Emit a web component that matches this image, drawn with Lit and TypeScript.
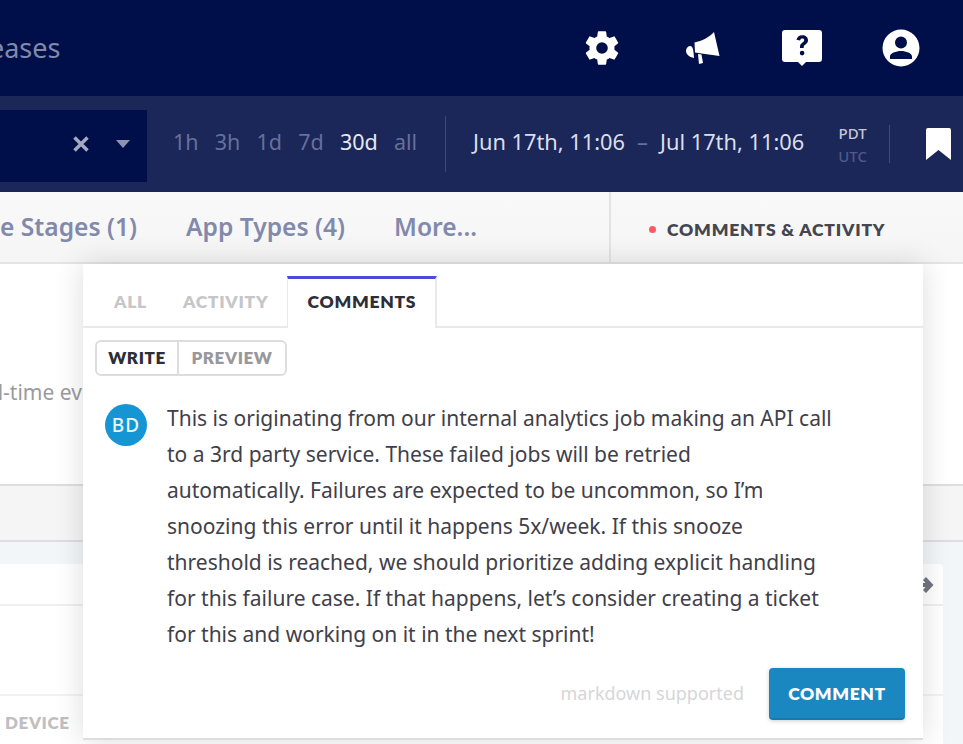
import { LitElement, html, css, svg } from "lit";
import { customElement } from "lit/decorators.js";

@customElement("app-root")
export class AppRoot extends LitElement {
  static styles = css`
    :host { display: block; width: 963px; height: 744px; overflow: hidden; position: relative; background: #fff; font-family: "Noto Sans", sans-serif; }
    * { box-sizing: border-box; }
    .top { height: 96px; background: #000f4a; display: flex; align-items: center; overflow: hidden; }
    .brand { margin-left: -50px; font: 27px "Noto Sans", sans-serif; color: #8089a8; flex: 1; white-space: nowrap; padding-bottom: 1px; }
    .icons { display: flex; align-items: center; }
    .icons svg { display: block; fill: #fff; }
    .i1 { margin-right: 64px; } .i2 { margin-right: 62px; } .i3 { margin-right: 60px; } .i4 { margin-right: 43px; }
    .sub { height: 96px; background: #1b2659; display: flex; align-items: center; }
    .search { width: 147px; height: 72px; margin-top: 4px; padding-bottom: 4px; background: #000f4a; display: flex; align-items: center; justify-content: flex-end; padding-right: 17px; gap: 26px; }
    .caret { width: 0; height: 0; border: 7px solid transparent; border-top: 8px solid #8e95b0; border-bottom: 0; }
    .ranges { display: flex; gap: 16.2px; margin-left: 26px; padding-bottom: 5px; font-size: 21.5px; color: #67709a; width: 272px; }
    .ranges .on { color: #e6e8f0; }
    .sep { width: 1px; background: #4f4a50; flex: none; }
    .sep.a { height: 56px; }
    .sep.b { height: 38px; margin-left: 22px; margin-top: -1px; }
    .dates { display: flex; margin-left: 27px; padding-bottom: 5px; font-size: 21.8px; color: #dcdfe9; white-space: nowrap; }
    .dash { color: #67709a; margin: 0 12px; }
    .tz { margin-left: 34px; font-size: 15px; font-weight: 500; display: flex; flex-direction: column; align-items: center; gap: 3px; color: #c4c8d6; line-height: 20px; }
    .tz .off { color: #50598a; }
    .mark { margin-left: 36px; fill: #fff; display: block; flex: none; }
    .filters { height: 72px; background: linear-gradient(#f9f9f9, #f5f5f5); border-bottom: 2px solid #e4e4e4; display: flex; align-items: stretch; }
    .flist { width: 611px; flex: none; border-right: 2px solid #e3e3e3; display: flex; align-items: center; gap: 49px; font-size: 24.6px; font-weight: 600; color: #8289ab; white-space: nowrap; padding-bottom: 1px; overflow: hidden; justify-content: flex-end; padding-right: 132px; }
    .ctitle { display: flex; align-items: center; padding: 5px 0 0 38px; font: 800 17.5px Lato, sans-serif; letter-spacing: .8px; color: #45464f; }
    .dot { width: 7px; height: 7px; border-radius: 50%; background: #fb5a63; margin-right: 11px; }
    .main { height: 222px; background: #fff; border-bottom: 2px solid #dedede; padding-top: 114px; font-size: 21px; color: #9a9a9e; white-space: nowrap; overflow: hidden; }
    .main span { margin-left: -39px; display: block; }
    .band { height: 56px; background: #f5f5f5; border-bottom: 2px solid #dedede; }
    .canvas { height: 202px; background: #f3f6f9; padding-top: 22px; }
    .card { width: 943px; height: 180px; background: #fff; border-radius: 0 4px 0 0; display: flex; flex-direction: column; }
    .chead { height: 42px; border-bottom: 2px solid #efefef; }
    .cmid { height: 90px; border-bottom: 2px solid #f3f3f3; }
    .cfoot { padding: 16px 0 0 5px; font: 800 17px Lato, sans-serif; letter-spacing: .6px; color: #bfbfc2; }
    .arrow { position: absolute; left: 920px; top: 577px; fill: #74767f; }
    .pop { position: absolute; left: 83px; top: 264px; width: 840px; height: 476px; background: #fff; border-bottom: 2px solid #dddddd; box-shadow: 0 0 28px rgba(0,0,0,.14); display: flex; flex-direction: column; }
    .tabs { height: 64px; flex: none; display: flex; align-items: stretch; border-bottom: 2px solid #e9e9e9; font: 800 17.5px Lato, sans-serif; letter-spacing: .7px; color: #c6c6c9; }
    .tab { display: flex; align-items: center; padding-top: 12px; }
    .tab.all { margin-left: 31px; } .tab.act { margin-left: 36px; }
    .tab.cur { margin: 12px 0 0 19px; width: 150px; justify-content: center; height: 52px; border-top: 3px solid #4a4bd8; border-left: 1px solid #e9e9e9; border-right: 2px solid #e9e9e9; background: #fff; color: #2d2e37; padding: 0 0 5px; }
    .seg { display: flex; flex: none; width: 192px; height: 36px; margin: 12px 0 0 12px; padding-bottom: 1px; border: 2px solid #dddddd; border-radius: 6px; font: 800 17px Lato, sans-serif; letter-spacing: .6px; }
    .seg div { display: flex; align-items: center; justify-content: center; }
    .seg .w { width: 82px; margin-bottom: -1px; padding-bottom: 1px; color: #2d2e37; border-right: 2px solid #dddddd; }
    .seg .p { flex: 1; color: #98989c; }
    .body { display: flex; margin: 24px 0 0 22px; }
    .av { width: 42px; height: 42px; flex: none; border-radius: 50%; background: #1595d3; color: #e8f5fb; display: flex; align-items: center; justify-content: center; font-size: 19px; font-weight: 500; margin-top: 4px; letter-spacing: 1px; }
    .txt { margin: 0 0 0 20px; width: 680px; font-size: 21px; line-height: 36px; color: #3f4049; }
    .actions { display: flex; justify-content: flex-end; align-items: center; margin: 16px 18px 0 0; }
    .hint { font-size: 18px; color: #d6d6d8; margin-right: 25px; padding-bottom: 2px; }
    .btn { width: 136px; height: 52px; display: flex; align-items: center; justify-content: center; background: #1a87c0; border-radius: 4px; border-bottom: 2px solid #167aad; box-shadow: 0 1px 4px rgba(0,0,0,.2); color: #fff; font: 800 17.5px Lato, sans-serif; letter-spacing: .6px; }
  `;

  render() {
    return html`
      <div class="top">
        <div class="brand">Releases</div>
        <div class="icons">
          <svg class="i1" width="40" height="40" viewBox="0 0 24 24"><path d="M19.43 12.98c.04-.32.07-.64.07-.98s-.03-.66-.07-.98l2.11-1.65a.5.5 0 0 0 .12-.64l-2-3.46a.5.5 0 0 0-.61-.22l-2.49 1a7.3 7.3 0 0 0-1.69-.98l-.38-2.65A.49.49 0 0 0 14 2h-4a.49.49 0 0 0-.49.42l-.38 2.65c-.61.25-1.17.59-1.69.98l-2.49-1a.49.49 0 0 0-.61.22l-2 3.46a.49.49 0 0 0 .12.64l2.11 1.65c-.04.32-.07.65-.07.98s.03.66.07.98l-2.11 1.65a.5.5 0 0 0-.12.64l2 3.46c.12.22.39.3.61.22l2.49-1c.52.4 1.08.73 1.69.98l.38 2.65c.03.24.24.42.49.42h4c.25 0 .46-.18.49-.42l.38-2.65c.61-.25 1.17-.59 1.69-.98l2.49 1c.23.09.49 0 .61-.22l2-3.46a.5.5 0 0 0-.12-.64zM12 15.5a3.5 3.5 0 1 1 0-7 3.5 3.5 0 0 1 0 7z"/></svg>
          <svg class="i2" width="34" height="34" viewBox="0 0 34 34"><path d="M28 1 33.500 25 15.500 22.500 9 21.500 8.500 11.500C16 10 23 6.500 28 1zM12 23 15.500 23.500 17 32 13 33zM4.500 15C6 15 7 17 7.500 21L8 27C3 26 0 23 0 20 0 17 2 15 4.500 15z"/></svg>
          <svg class="i3" width="40" height="36" viewBox="0 0 40 36"><path fill-rule="evenodd" d="M3 0h34a3 3 0 0 1 3 3v26a3 3 0 0 1-3 3H24l-4 4-4-4H3a3 3 0 0 1-3-3V3a3 3 0 0 1 3-3zm11.500 9.800 3.600.8c.4-1.400 1.100-2 2.200-2 1.200 0 1.900.7 1.900 1.700 0 .9-.6 1.500-1.700 2.300-1.700 1.200-2.500 2.300-2.500 4.200v1.100h3.700v-.8c0-1.100.4-1.600 1.500-2.400 1.700-1.200 2.800-2.500 2.800-4.500 0-3-2.400-5-5.700-5-3.300 0-5.200 1.800-5.800 4.600zM20.100 20.800a2.300 2.300 0 1 0 0 4.600 2.300 2.300 0 0 0 0-4.600z"/></svg>
          <svg class="i4" width="38" height="38" viewBox="0 0 38 38"><path fill-rule="evenodd" d="M19 .5a18.500 18.500 0 1 1 0 37 18.500 18.500 0 0 1 0-37zm0 7a6 6 0 1 0 0 12 6 6 0 0 0 0-12zM19 22c-5 0-11 2.300-11 5.500V30h22v-2.500C30 24.300 24 22 19 22z"/></svg>
        </div>
      </div>
      <div class="sub">
        <div class="search">
          <svg width="18" height="18" viewBox="0 0 18 18">${svg`<path d="M2.500 2.500 15.500 15.500M15.500 2.500 2.500 15.500" stroke="#a4a9c0" stroke-width="3.500" fill="none"/>`}</svg>
          <div class="caret"></div>
        </div>
        <div class="ranges"><span>1h</span><span>3h</span><span>1d</span><span>7d</span><span class="on">30d</span><span>all</span></div>
        <div class="sep a"></div>
        <div class="dates"><span>Jun 17th, 11:06</span><span class="dash">–</span><span>Jul 17th, 11:06</span></div>
        <div class="tz"><span>PDT</span><span class="off">UTC</span></div>
        <div class="sep b"></div>
        <svg class="mark" width="25" height="32" viewBox="0 0 25 32"><path d="M2 0h21a2 2 0 0 1 2 2v30L12.500 22 0 32V2a2 2 0 0 1 2-2z"/></svg>
      </div>
      <div class="filters">
        <div class="flist"><span>Release Stages (1)</span><span>App Types (4)</span><span>More...</span></div>
        <div class="ctitle"><span class="dot"></span>COMMENTS &amp; ACTIVITY</div>
      </div>
      <div class="main"><span>Real-time events</span></div>
      <div class="band"></div>
      <div class="canvas"><div class="card"><div class="chead"></div><div class="cmid"></div><div class="cfoot">DEVICE</div></div></div>
      <svg class="arrow" width="14" height="16" viewBox="0 0 14 16"><path d="M6 0 13.500 8 6 16 3 13 5.500 10H0V6h5.500L3 3z"/></svg>
      <div class="pop">
        <div class="tabs"><div class="tab all">ALL</div><div class="tab act">ACTIVITY</div><div class="tab cur">COMMENTS</div></div>
        <div class="seg"><div class="w">WRITE</div><div class="p">PREVIEW</div></div>
        <div class="body">
          <div class="av">BD</div>
          <p class="txt">This is originating from our internal analytics job making an API call<br>to a 3rd party service. These failed jobs will be retried<br>automatically. Failures are expected to be uncommon, so I’m<br>snoozing this error until it happens 5x/week. If this snooze<br>threshold is reached, we should prioritize adding explicit handling<br>for this failure case. If that happens, let’s consider creating a ticket<br>for this and working on it in the next sprint!</p>
        </div>
        <div class="actions"><span class="hint">markdown supported</span><div class="btn">COMMENT</div></div>
      </div>
    `;
  }
}
